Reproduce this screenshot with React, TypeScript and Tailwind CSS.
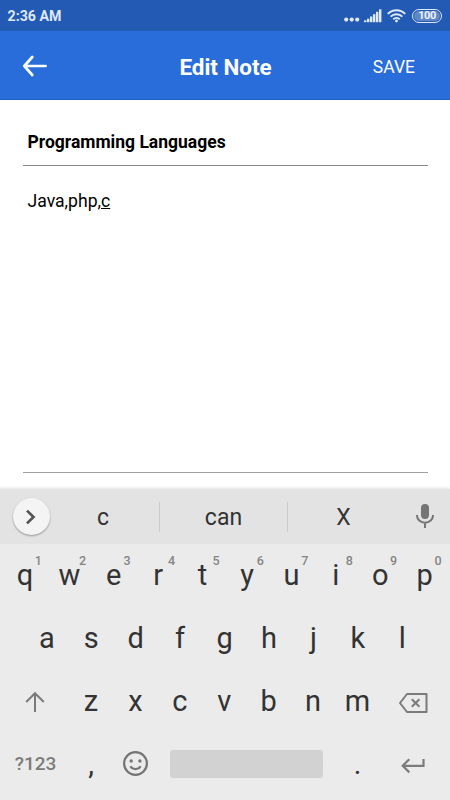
"use client"
import type { ReactNode } from "react"

const topRow = ["q", "w", "e", "r", "t", "y", "u", "i", "o", "p"]
const homeRow = ["a", "s", "d", "f", "g", "h", "j", "k", "l"]
const bottomRow = ["z", "x", "c", "v", "b", "n", "m"]

interface KeyProps {
  children: ReactNode
  hint?: number
}

function Key({ children, hint }: KeyProps) {
  return (
    <button className="relative h-[63px] w-[44.43px] shrink-0 text-center text-[29px] leading-[63px] text-[#333333]">
      {children}
      {/* Long-press digit on the top row */}
      {hint !== undefined && (
        <span className="absolute top-[9px] left-[32px] text-[12.5px] leading-4 font-medium text-[#858585]">{hint}</span>
      )}
    </button>
  )
}

function StatusBar() {
  return (
    <div className="flex h-[31px] items-center justify-between bg-[#235ab3] pr-[8px] pl-[7.5px] text-[#dfe9f8]">
      <span className="pt-px text-[14.2px] leading-4 font-bold">2:36 AM</span>
      <div className="flex items-center">
        <svg width="16" height="14" viewBox="0 0 16 14" fill="currentColor">
          <circle cx="2.2" cy="10.6" r="2.1" />
          <circle cx="7.7" cy="10.6" r="2.1" />
          <circle cx="13.2" cy="10.6" r="2.1" />
        </svg>
        <svg className="ml-[4px]" width="18" height="14" viewBox="0 0 18 14" fill="currentColor">
          <rect x="0" y="11.3" width="2.4" height="1.9" />
          <rect x="3" y="9.7" width="2.4" height="3.5" />
          <rect x="6" y="7.5" width="2.4" height="5.7" />
          <rect x="9" y="5.2" width="2.4" height="8" />
          <rect x="12" y="2.8" width="2.4" height="10.4" />
          <rect x="15" y="0.3" width="2.4" height="12.9" />
        </svg>
        <svg className="ml-[5px]" width="19" height="14" viewBox="0 0 19 14" fill="none" stroke="currentColor" strokeWidth="1.9">
          <path d="M0.8 4.9a12.2 12.2 0 0 1 17.4 0" />
          <path d="M3.6 7.6a8.4 8.4 0 0 1 11.8 0" />
          <path d="M6.3 10.2a4.6 4.6 0 0 1 6.4 0" />
          <circle cx="9.5" cy="12" r="1.4" fill="currentColor" stroke="none" />
        </svg>
        <div className="ml-[6px] flex h-[14px] w-[30px] items-center justify-center rounded-full border-[1.5px] border-[#dfe9f8] p-px">
          <span className="flex h-full w-full items-center justify-center rounded-full bg-[#5f88cb] text-[11px] leading-none font-bold tracking-[-0.5px] text-[#eef4fd]">
            100
          </span>
        </div>
      </div>
    </div>
  )
}

function Header() {
  return (
    <header className="grid h-[69px] grid-cols-[1fr_auto_1fr] items-center border-b border-[#1f5fca] bg-[#286dd9] pt-[3px] text-white">
      <button className="mb-px ml-[22px] justify-self-start">
        <svg width="26" height="22" viewBox="0 0 26 22" fill="none" stroke="currentColor" strokeWidth="2.7" strokeLinecap="round" strokeLinejoin="round">
          <path d="M23.6 11H2.3M10.3 2L2.3 11l8 9" />
        </svg>
      </button>
      <h1 className="pt-[2px] pl-px text-[22.4px] font-bold">Edit Note</h1>
      <button className="mr-[35px] justify-self-end pt-[2px] text-[17.5px]">SAVE</button>
    </header>
  )
}

function SuggestionBar() {
  return (
    <div className="flex h-[55px] items-center bg-[#e3e3e3] text-[23px] text-[#333333]">
      <button className="ml-[12.5px] flex size-[37.5px] items-center justify-center rounded-full bg-[#f4f4f4] shadow-[0_1px_2px_rgba(0,0,0,0.35)]">
        <svg width="12" height="16" viewBox="0 0 12 16" fill="none" stroke="#555555" strokeWidth="2.7">
          <path d="M2 1.6l6.5 6.4L2 14.4" />
        </svg>
      </button>
      <span className="w-[109px] pt-[3px] pr-[3px] text-center">c</span>
      <span className="h-[30px] w-px bg-[#cccccc]" />
      <span className="w-[127px] pt-[3px] text-center">can</span>
      <span className="h-[30px] w-px bg-[#cccccc]" />
      <span className="w-[110px] pt-[3px] pl-px text-center">X</span>
      <svg className="mb-[2px] ml-[17px]" width="20" height="26" viewBox="0 0 20 26" fill="none" stroke="#757575" strokeWidth="2">
        <rect x="6" y="1" width="8" height="15" rx="4" fill="#757575" stroke="none" />
        <path d="M2 12v0.5a8 7.2 0 0 0 16 0V12M10 20v5" />
      </svg>
    </div>
  )
}

function Keyboard() {
  return (
    <div className="flex h-[311px] flex-col bg-[#ebebeb] shadow-[0_-1px_3px_rgba(0,0,0,0.12)]">
      <SuggestionBar />
      <div className="flex pl-[2.7px]">
        {topRow.map((letter, i) => (
          <Key key={letter} hint={(i + 1) % 10}>{letter}</Key>
        ))}
      </div>
      <div className="flex pl-[24.7px]">
        {homeRow.map((letter) => (
          <Key key={letter}>{letter}</Key>
        ))}
      </div>
      <div className="flex items-center">
        <button className="flex w-[68.8px] justify-center pt-px pl-px">
          <svg width="20" height="22" viewBox="0 0 20 22" fill="none" stroke="#7b7b7b" strokeWidth="2">
            <path d="M10 21V2.4M1.2 11L10 2.2 18.8 11" />
          </svg>
        </button>
        {bottomRow.map((letter) => (
          <Key key={letter}>{letter}</Key>
        ))}
        <button className="ml-[18px] pt-[2px]">
          <svg width="31" height="22" viewBox="0 0 31 22" fill="none" stroke="#7b7b7b" strokeWidth="2" strokeLinejoin="round">
            <path d="M9 2h19.5v18H9L2 11z" />
            <path d="M11.9 7.2l7.6 7.6M19.5 7.2l-7.6 7.6" transform="translate(1.9 0)" />
          </svg>
        </button>
      </div>
      <div className="flex h-[63px] items-center">
        <button className="w-[69px] pl-[2px] text-center text-[19px] font-medium text-[#7b7b7b]">?123</button>
        <Key>,</Key>
        <button className="mb-[2px] ml-[8.5px]">
          <svg width="27" height="27" viewBox="0 0 27 27" fill="none" stroke="#757575" strokeWidth="2.2">
            <circle cx="13.5" cy="13.5" r="11.4" />
            <circle cx="9.2" cy="11" r="1.7" fill="#757575" stroke="none" />
            <circle cx="17.9" cy="11" r="1.7" fill="#757575" stroke="none" />
            <path d="M8.4 16.3c2.1 3.7 8.1 3.7 10.2 0" />
          </svg>
        </button>
        <button className="mb-px ml-[21px] h-[28px] w-[153px] rounded-[3px] bg-[#d2d2d2]" />
        <div className="ml-[12.5px]">
          <Key>.</Key>
        </div>
        <button className="ml-[20.3px]">
          <svg width="26" height="18" viewBox="0 0 26 18" fill="none" stroke="#7b7b7b" strokeWidth="2.2">
            <path d="M23.5 3v6.8H3M9.3 3.2L2.7 9.8l6.6 6.6" />
          </svg>
        </button>
      </div>
    </div>
  )
}

export default function App() {
  return (
    <div className="flex h-[800px] w-[450px] flex-col overflow-hidden bg-white font-[Roboto,sans-serif]">
      <StatusBar />
      <Header />
      <main className="flex flex-1 flex-col px-[22.5px] text-black">
        <div className="h-[66px] border-b border-[#8a8a8a] px-[5px] pt-[31px] text-[17.5px] leading-[22px] font-bold">
          Programming Languages
        </div>
        <div className="h-[307px] border-b border-[#a0a0a0] px-[5px] pt-[24px] text-[17.6px] leading-[22px]">
          Java,php,<span className="underline">c</span>
        </div>
      </main>
      <Keyboard />
    </div>
  )
}
